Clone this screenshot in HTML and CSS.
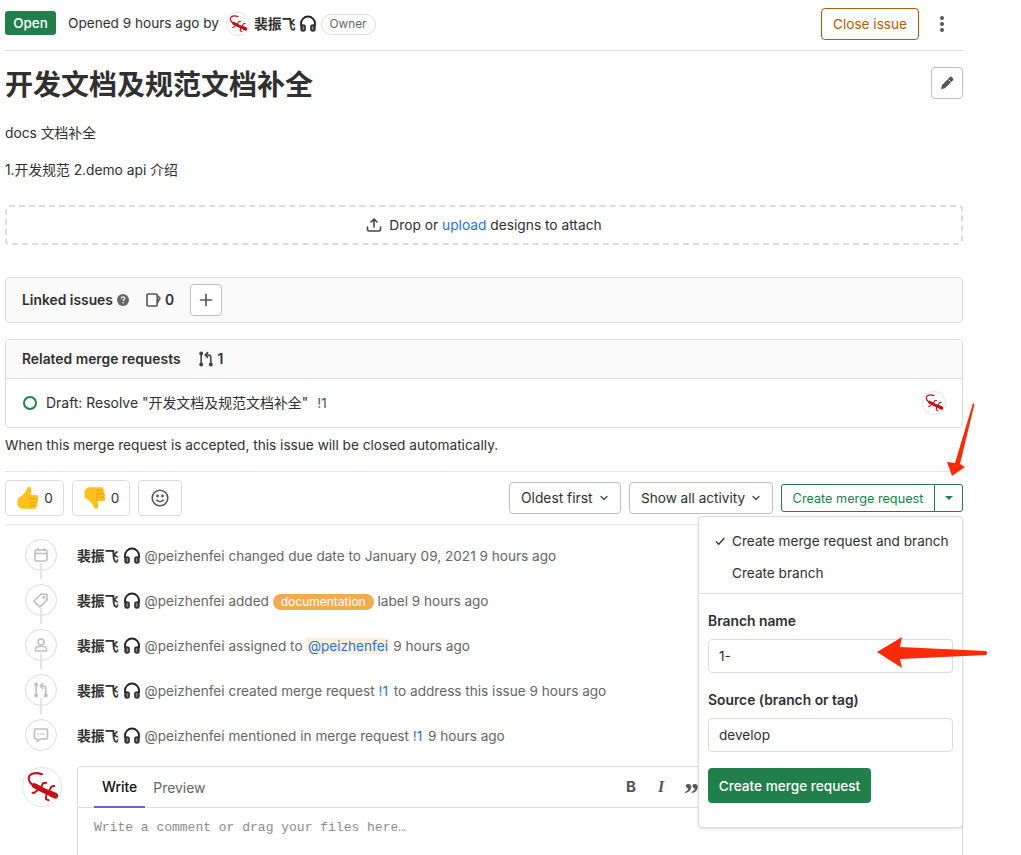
FILE: index.html
```html
<!DOCTYPE html>
<html lang="zh">
<head>
<meta charset="utf-8">
<title>Issue</title>
<link rel="stylesheet" href="styles.css">
</head>
<body>
<svg class="defs" width="0" height="0" aria-hidden="true">
  <symbol id="gecko" viewBox="0 0 40 40">
    <g fill="none" stroke="#c20f17" stroke-linecap="round" stroke-linejoin="round">
      <path d="M20 6.500C14 4.500 6.500 5 6 10.500c-.3 3.500 2.500 6.500 7 9.500" stroke-width="2.200"/>
      <path d="M12 18.500c5 3 12 6.500 20 9.500" stroke-width="5.400"/>
      <path d="M18 21l-6 5-2 0M19 21l2-5 3.500-.5M27 25l3-5.500 3 -.5M25 26l-1 6.500 3 1.500" stroke-width="2"/>
      <path d="M30 27.500l4 1.700" stroke-width="6"/>
    </g>
  </symbol>
  <symbol id="phones" viewBox="0 0 18 18">
    <path d="M2 11V8.500a7 7 0 0 1 14 0V11" fill="none" stroke="#222" stroke-width="1.900"/>
    <rect x="1.300" y="9.300" width="5.600" height="7.400" rx="2.600" fill="#333"/>
    <rect x="11.100" y="9.300" width="5.600" height="7.400" rx="2.600" fill="#333"/>
    <rect x="3.600" y="11" width="1.600" height="4" rx=".8" fill="#888"/>
    <rect x="12.800" y="11" width="1.600" height="4" rx=".8" fill="#888"/>
  </symbol>
  <symbol id="mr" viewBox="0 0 16 16">
    <g fill="none" stroke="currentColor" stroke-width="1.600" stroke-linecap="round" stroke-linejoin="round">
      <circle cx="3.200" cy="2.600" r="1.200" fill="currentColor"/><circle cx="3.200" cy="13.400" r="1.200" fill="currentColor"/><circle cx="12.800" cy="13.400" r="1.200" fill="currentColor"/>
      <path d="M3.200 3.500v9M12.800 12.200V6.500c0-1.500-1-2.500-2.500-2.500H7.600M9.600 1.600L7.200 4l2.400 2.400"/>
    </g>
  </symbol>
  <symbol id="chev" viewBox="0 0 16 16"><path d="M4 6l4 4 4-4" fill="none" stroke="currentColor" stroke-width="2" stroke-linecap="round" stroke-linejoin="round"/></symbol>
  <symbol id="thumb" viewBox="0 0 24 24">
    <path d="M1.500 14C1.500 12 4.500 11 6.500 9C8.500 7 10.500 5 11 2.500C11.300 .6 14.800 .4 15.300 3C15.700 5.500 14.600 7.500 14.300 9H20.500a2 2 0 0 1 .8 3.800a2 2 0 0 1-.3 3.600a2 2 0 0 1-.8 3.400a2 2 0 0 1-1.700 3H9C4.500 23 1.500 21 1.500 18z" fill="#fcc21b"/>
    <path d="M14.500 12.800h6.600M14.500 16.400h6.300M14.500 19.800h5.500" stroke="#e8a00e" stroke-width="1" fill="none"/>
    <path d="M14.500 9c-1 .6-1.200 2.300 0 3.800-1 1-1 2.600 0 3.600-.8 1-.8 2.400 0 3.400" stroke="#e8a00e" stroke-width=".8" fill="none"/>
  </symbol>
</svg>

<main class="page">
  <header class="issue-bar">
    <span class="badge-open">Open</span>
    <span class="opened">Opened 9 hours ago by</span>
    <svg class="avatar av24"><use href="#gecko"/></svg>
    <strong class="author">裴振飞</strong>
    <svg class="phones ph-top"><use href="#phones"/></svg>
    <span class="owner">Owner</span>
    <button class="btn-close">Close issue</button>
    <span class="kebab"><i></i><i></i><i></i></span>
  </header>

  <div class="title-row">
    <h1>开发文档及规范文档补全</h1>
    <button class="btn-edit" aria-label="Edit">
      <svg width="16" height="16" viewBox="0 0 16 16"><path d="M10.600 2.200a1.600 1.600 0 0 1 2.300 0l.9.9a1.600 1.600 0 0 1 0 2.300l-7.900 7.900-3.900.9.9-3.900z" fill="#555"/><path d="M9.500 4.600l1.900 1.900" stroke="#fff" stroke-width="1"/></svg>
    </button>
  </div>

  <p class="desc first">docs 文档补全</p>
  <p class="desc second">1.开发规范 2.demo api 介绍</p>

  <div class="dropzone">
    <svg width="16" height="16" viewBox="0 0 16 16" fill="none" stroke="#444" stroke-width="1.600" stroke-linecap="round" stroke-linejoin="round"><path d="M8 10V2.500M5 5l3-3 3 3M1.500 10v2.500c0 1 .6 1.500 1.500 1.500h10c.9 0 1.500-.5 1.500-1.500V10"/></svg>
    <span>Drop or <a class="link">upload</a> designs to attach</span>
  </div>

  <section class="card linked">
    <strong>Linked issues</strong>
    <svg class="help" width="12" height="12" viewBox="0 0 12 12"><circle cx="6" cy="6" r="6" fill="#666"/><path d="M4.300 4.600c0-2.200 3.500-2.200 3.500-.2 0 1.200-1.700 1.200-1.700 2.500" fill="none" stroke="#fff" stroke-width="1.200"/><circle cx="6.100" cy="8.800" r=".8" fill="#fff"/></svg>
    <svg class="issue-ic" width="16" height="16" viewBox="0 0 16 16" fill="none" stroke="#555" stroke-width="1.600" stroke-linejoin="round"><path d="M2 3.200C2 2.500 2.500 2 3.200 2H11c.7 0 1.200.5 1.200 1.200v9.600c0 .7-.5 1.200-1.200 1.200H3.200C2.500 14 2 13.500 2 12.800z"/><path d="M12.200 3.500L15 6l-2.800 5"/></svg>
    <strong class="count">0</strong>
    <button class="btn-plus" aria-label="Add">
      <svg width="16" height="16" viewBox="0 0 16 16"><path d="M8 2.500v11M2.500 8h11" stroke="#555" stroke-width="1.600" stroke-linecap="round"/></svg>
    </button>
  </section>

  <section class="card related">
    <div class="related-head">
      <strong>Related merge requests</strong>
      <svg class="mr-ic"><use href="#mr"/></svg>
      <strong class="count">1</strong>
    </div>
    <div class="related-row">
      <span class="ring"></span>
      <span class="mr-title">Draft: Resolve "开发文档及规范文档补全"</span>
      <span class="mr-ref">!1</span>
      <svg class="avatar av24 push"><use href="#gecko"/></svg>
    </div>
  </section>

  <p class="closing">When this merge request is accepted, this issue will be closed automatically.</p>

  <div class="actions">
    <button class="award up">
      <svg class="thumb"><use href="#thumb"/></svg>
      <span>0</span>
    </button>
    <button class="award down">
      <svg class="thumb flip"><use href="#thumb"/></svg>
      <span>0</span>
    </button>
    <button class="award smile" aria-label="Add reaction">
      <svg width="18" height="18" viewBox="0 0 18 18" fill="none" stroke="#555" stroke-width="1.600" stroke-linecap="round"><circle cx="9" cy="9" r="7.800"/><path d="M5.800 11c1.600 2 4.800 2 6.400 0"/><circle cx="6.500" cy="7" r=".6" fill="#555"/><circle cx="11.500" cy="7" r=".6" fill="#555"/></svg>
    </button>
    <button class="select oldest">Oldest first<svg class="chev"><use href="#chev"/></svg></button>
    <button class="select activity">Show all activity<svg class="chev"><use href="#chev"/></svg></button>
    <div class="split">
      <span class="split-main">Create merge request</span>
      <span class="split-caret"><i></i></span>
    </div>
  </div>

  <ul class="timeline">
    <li>
      <span class="node"><svg width="16" height="16" viewBox="0 0 16 16" fill="none" stroke="currentColor" stroke-width="1.600" stroke-linejoin="round"><rect x="2" y="3" width="12" height="11" rx="1.500"/><path d="M2 6.500h12M5 1v3M11 1v3"/></svg></span>
      <strong class="author">裴振飞</strong><svg class="phones"><use href="#phones"/></svg>
      <span class="note">@peizhenfei changed due date to January 09, 2021 9 hours ago</span>
    </li>
    <li>
      <span class="node"><svg width="16" height="16" viewBox="0 0 16 16" fill="none" stroke="currentColor" stroke-width="1.600" stroke-linejoin="round"><path d="M14 2.500v5.500l-6.500 6.500a1 1 0 0 1-1.400 0L1.500 9.900a1 1 0 0 1 0-1.400L8 2z"/><circle cx="10.800" cy="5.200" r=".7"/></svg></span>
      <strong class="author">裴振飞</strong><svg class="phones"><use href="#phones"/></svg>
      <span class="note">@peizhenfei added <span class="label">documentation</span> label 9 hours ago</span>
    </li>
    <li>
      <span class="node"><svg width="16" height="16" viewBox="0 0 16 16" fill="none" stroke="currentColor" stroke-width="1.600" stroke-linejoin="round"><circle cx="8" cy="5" r="3"/><path d="M2.500 14v-1.500C2.500 10.500 4 9.500 6 9.500h4c2 0 3.500 1 3.500 3V14z"/></svg></span>
      <strong class="author">裴振飞</strong><svg class="phones"><use href="#phones"/></svg>
      <span class="note">@peizhenfei assigned to <a class="mention">@peizhenfei</a> 9 hours ago</span>
    </li>
    <li>
      <span class="node"><svg class="mr-node"><use href="#mr"/></svg></span>
      <strong class="author">裴振飞</strong><svg class="phones"><use href="#phones"/></svg>
      <span class="note">@peizhenfei created merge request <a class="link">!1</a> to address this issue 9 hours ago</span>
    </li>
    <li>
      <span class="node"><svg width="16" height="16" viewBox="0 0 16 16" fill="none" stroke="currentColor" stroke-width="1.600" stroke-linejoin="round"><path d="M2.500 2h11c.6 0 1 .4 1 1v8c0 .6-.4 1-1 1H7l-3 2.500V12H2.500c-.6 0-1-.4-1-1V3c0-.6.4-1 1-1z"/><path d="M5 7h.5M7.800 7h.5M10.500 7h.5" stroke-linecap="round"/></svg></span>
      <strong class="author">裴振飞</strong><svg class="phones"><use href="#phones"/></svg>
      <span class="note">@peizhenfei mentioned in merge request <a class="link">!1</a> 9 hours ago</span>
    </li>
  </ul>

  <div class="composer">
    <svg class="avatar av40"><use href="#gecko"/></svg>
    <div class="editor">
      <div class="tabs">
        <span class="tab active">Write</span>
        <span class="tab">Preview</span>
        <span class="tools">
          <b class="tool tool-b">B</b><i class="tool">I</i><span class="tool quote">”</span>
        </span>
      </div>
      <div class="placeholder">Write a comment or drag your files here…</div>
    </div>
  </div>
</main>

<aside class="menu">
  <div class="menu-opts">
    <div class="opt"><svg class="check" width="10" height="10" viewBox="0 0 10 10"><path d="M1 5.500l2.800 2.800L9.300 2" fill="none" stroke="#333" stroke-width="1.300"/></svg>Create merge request and branch</div>
    <div class="opt">Create branch</div>
  </div>
  <form class="menu-form">
    <label class="fld-label">Branch name</label>
    <input class="fld" value="1-">
    <label class="fld-label second-label">Source (branch or tag)</label>
    <input class="fld" value="develop">
    <button type="button" class="btn-create">Create merge request</button>
  </form>
</aside>

<svg class="arrow arrow-down" width="40" height="80" viewBox="0 0 40 80"><path d="M32 2l1.500 1L19 63l5 3-13 9L6 61l8 1z" fill="#fb2a08"/></svg>
<svg class="arrow arrow-left" width="120" height="40" viewBox="0 0 120 40"><path d="M1 16L26 1l-2 10 86 4q2 2 0 4l-86 4 2 9z" fill="#fb2a08"/></svg>
</body>
</html>
```
FILE: styles.css
```css
* { box-sizing: border-box; }
html, body { margin: 0; height: 855px; overflow: hidden; background: #fff; }
body {
  position: relative;
  font: 13.6px/20px Inter, "Noto Sans CJK SC", sans-serif;
  color: #303030;
}
button, input { font: inherit; }
.defs { position: absolute; }
.page { width: 958px; height: 855px; overflow: hidden; margin-left: 5px; }
.link { color: #1f75cb; }
strong { font-weight: 600; font-size: 13.85px; }

.avatar { border-radius: 50%; border: 1px solid #e5e5e5; background: #fff; flex: none; }
.av24 { width: 24px; height: 24px; }
.av40 { width: 40px; height: 40px; }
.phones { width: 18px; height: 18px; flex: none; }

.issue-bar {
  display: flex; align-items: center; height: 51px;
  padding-bottom: 4px;
  border-bottom: 1px solid #dcdcdc;
}
.badge-open {
  width: 51px; height: 24px; line-height: 24px; text-align: center;
  background: #217f4b; color: #fff; border-radius: 3px; font-weight: 500; font-size: 13.4px;
}
.opened { margin-left: 12px; }
.issue-bar .avatar { margin: 2px 0 0 7px; }
.author { font-weight: 600; color: #303030; }
.issue-bar .author { margin: 2px 0 0 4px; }
.ph-top { margin: 2px 0 0 3px; }
.owner {
  margin: 2px 0 0 4px; padding: 0 8px; height: 21px; line-height: 19px; font-size: 11.8px;
  color: #666; border: 1px solid #dcdcdc; border-radius: 11px;
}
.btn-close {
  margin: 2px 0 0 auto; width: 98px; height: 32px; padding: 0; background: #fff;
  color: #b15e00; border: 1px solid #b15e00; border-radius: 4px;
}
.kebab { display: flex; flex-direction: column; gap: 2px; width: 4px; margin: 2px 19px 0 21px; }
.kebab i { width: 4px; height: 4px; border-radius: 50%; background: #555; }

.title-row { display: flex; justify-content: space-between; align-items: center; height: 65px; }
h1 { margin: 2px 0 0; font-size: 28px; line-height: 36px; font-weight: 600; color: #303030; }
.btn-edit {
  width: 32px; height: 32px; padding: 0; background: #fff; display: flex;
  align-items: center; justify-content: center;
  border: 1px solid #bfbfbf; border-radius: 4px; margin-bottom: 1px;
}
.desc { margin: 0; font-size: 13.8px; }
.first { margin-top: 7px; }
.second { margin-top: 17px; }

.dropzone {
  display: flex; align-items: center; justify-content: center; gap: 7px;
  height: 40px; margin-top: 25px; font-size: 13.75px;
  border: 2px dashed #dcdcdc; border-radius: 4px;
}

.card { border: 1px solid #dcdcdc; border-radius: 4px; }
.linked {
  display: flex; align-items: center; height: 46px; margin-top: 32px;
  padding-left: 16px; background: #fafafa;
}
.help { margin-left: 4px; }
.issue-ic { margin-left: 16px; }
.count { margin-left: 4px; }
.btn-plus {
  width: 32px; height: 32px; padding: 0; margin-left: 16px; background: #fff;
  display: flex; align-items: center; justify-content: center;
  border: 1px solid #bfbfbf; border-radius: 4px;
}
.related { margin-top: 16px; height: 89px; }
.related-head {
  display: flex; align-items: center; height: 39px; padding-left: 16px;
  background: #fafafa; border-bottom: 1px solid #dcdcdc;
}
.mr-ic { width: 16px; height: 16px; margin-left: 17px; color: #444; }
.related-row { display: flex; align-items: center; height: 48px; padding: 0 16px 0 17px; }
.ring { width: 14px; height: 14px; border: 2px solid #217f4b; border-radius: 50%; flex: none; }
.mr-title { margin-left: 9px; font-size: 13.95px; }
.mr-ref { margin-left: 9px; color: #555; }
.push { margin-left: auto; }
.closing { margin: 7px 0 0; font-size: 13.65px; }

.actions {
  display: flex; align-items: center; height: 54px; margin-top: 16px;
  border-top: 1px solid #e5e5e5; border-bottom: 1px solid #e5e5e5;
}
.award {
  display: flex; align-items: center; justify-content: center; gap: 4px;
  height: 36px; padding: 0; background: #fff; border: 1px solid #dcdcdc; border-radius: 4px;
  color: #303030;
}
.thumb { width: 24px; height: 24px; }
.flip { transform: scaleY(-1); }
.up { width: 59px; }
.down { width: 58px; margin-left: 8px; }
.smile { width: 44px; margin-left: 8px; }
.select {
  display: flex; align-items: center; justify-content: space-between;
  height: 32px; padding: 0 10px 0 11px; background: #fff; color: #303030;
  border: 1px solid #bfbfbf; border-radius: 4px; white-space: nowrap;
}
.chev { width: 12px; height: 12px; color: #555; }
.oldest { width: 112px; margin-left: auto; font-size: 13.8px; }
.activity { width: 144px; margin-left: 8px; }
.split {
  display: flex; height: 28px; margin-left: 8px; width: 182px;
  border: 1px solid #217f4b; border-radius: 3px; color: #217f4b; font-size: 12.7px;
}
.split-main { flex: 1; line-height: 27px; text-align: center; }
.split-caret {
  width: 28px; display: flex; align-items: center; justify-content: center;
  border-left: 1px solid #217f4b;
}
.split-caret i { border: 4px solid transparent; border-top: 4px solid #217f4b; border-bottom: 0; width: 0; height: 0; }

.timeline { list-style: none; margin: 8px 0 0; padding: 0; }
.timeline li { position: relative; display: flex; align-items: center; height: 45px; padding-left: 72px; }
.timeline li + li::before {
  content: ""; position: absolute; left: 35px; top: -15px; width: 2px; height: 16px; background: #e5e5e5;
}
.node {
  position: absolute; left: 20px; top: 6px; width: 32px; height: 32px;
  display: flex; align-items: center; justify-content: center;
  border: 1px solid #dcdcdc; border-radius: 50%; color: #bfbfbf; background: #fff;
}
.mr-node { width: 16px; height: 16px; }
.timeline .phones { margin: 0 4px; }
.note { color: #666; }
.note .link { margin-right: 2px; }
.label {
  display: inline-block; height: 16px; line-height: 16px; padding: 0 8px;
  background: #f0ad4e; color: #fff; border-radius: 8px; font-size: 12px;
}
.mention { color: #1f75cb; background: #fdf1dd; padding: 0 1.5px; }

.composer { display: flex; margin-top: 8px; padding-left: 17px; }
.composer .avatar { margin-top: 1px; }
.editor {
  width: 886px; height: 150px; margin-left: 15px;
  border: 1px solid #dcdcdc; border-radius: 4px;
}
.tabs { display: flex; align-items: stretch; height: 41px; padding: 0 16px; border-bottom: 1px solid #dcdcdc; }
.tab { display: flex; align-items: center; padding: 0 8px; color: #666; height: 41px; font-size: 13.9px; }
.tab.active { color: #111; font-weight: 500; border-bottom: 2px solid #6666c4; }
.tools { margin-left: auto; display: flex; align-items: center; gap: 16px; margin-right: 248px; }
.tool { color: #555; width: 14px; text-align: center; font-weight: 700; font-family: "Liberation Serif", serif; font-size: 16px; }
.tool-b { font-family: Inter, sans-serif; font-size: 15px; }
.quote { font-size: 30px; line-height: 30px; padding-top: 12px; }
.placeholder {
  padding: 10px 16px; font: 13px/20px "Liberation Mono", monospace; color: #8c8c8c;
}

.menu {
  position: absolute; left: 698px; top: 516px; width: 265px; height: 312px;
  background: #fff; border: 1px solid #dcdcdc; border-radius: 4px;
  box-shadow: 0 1px 3px rgba(0, 0, 0, .12);
}
.menu-opts { height: 77px; padding-top: 8px; border-bottom: 1px solid #dcdcdc; }
.opt { position: relative; height: 32px; line-height: 32px; padding-left: 33px; color: #303030; }
.check { position: absolute; left: 16px; top: 11px; }
.menu-form { padding: 17px 9px 0; display: flex; flex-direction: column; align-items: flex-start; }
.fld-label { font-weight: 600; height: 20px; font-size: 13.85px; }
.fld {
  width: 245px; height: 34px; margin-top: 8px; padding: 0 10px;
  border: 1px solid #dcdcdc; border-radius: 4px; color: #303030; background: #fff;
}
.second-label { margin-top: 17px; }
.btn-create {
  margin-top: 16px; width: 163px; height: 35px; padding: 0;
  background: #217f4b; color: #fff; border: 0; border-radius: 4px; font-weight: 500;
}

.arrow { position: absolute; }
.arrow-down { left: 941px; top: 401px; }
.arrow-left { left: 876px; top: 636px; }
```
